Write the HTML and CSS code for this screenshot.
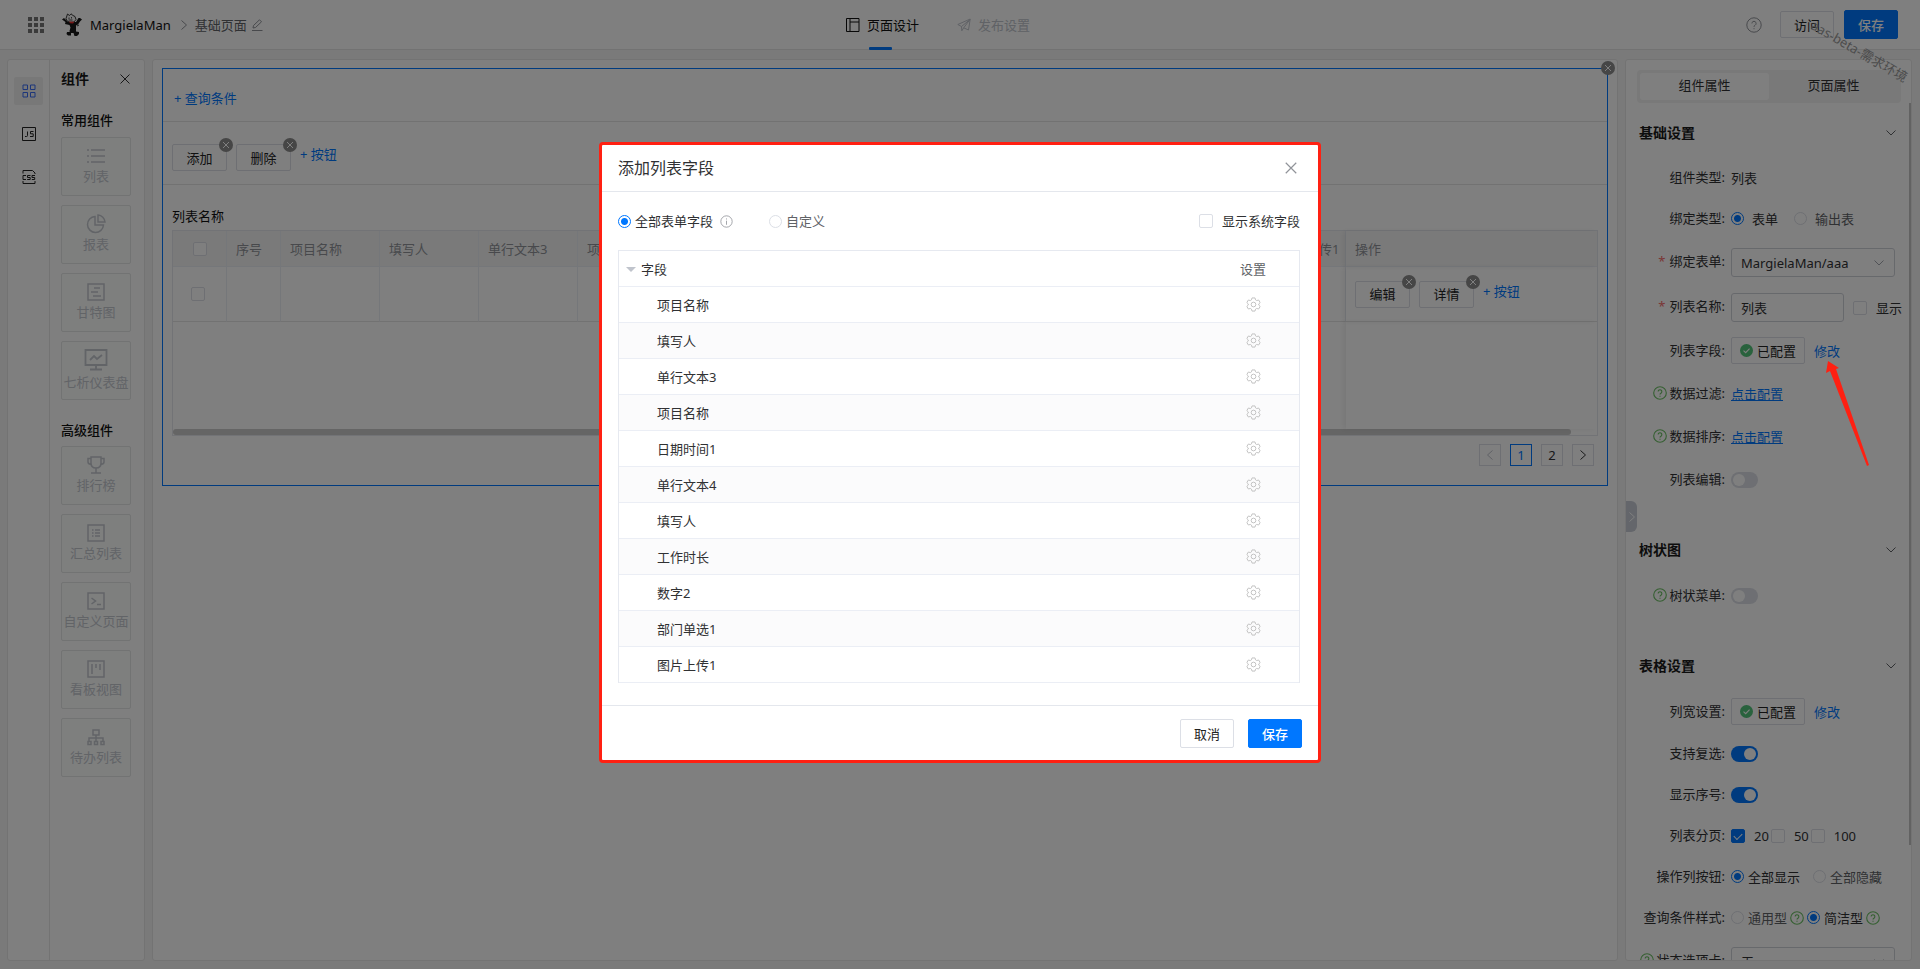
FILE: index.html
```html
<!DOCTYPE html>
<html lang="zh-CN">
<head>
<meta charset="utf-8">
<title>页面设计</title>
<link rel="stylesheet" href="styles.css">
</head>
<body>
<svg class="sprite" aria-hidden="true">
  <symbol id="x" viewBox="0 0 12 12"><path d="M1.500 1.500l9 9M10.500 1.500l-9 9"/></symbol>
  <symbol id="down" viewBox="0 0 12 12"><path d="M1.500 3.500L6 8l4.500-4.500"/></symbol>
  <symbol id="right" viewBox="0 0 12 12"><path d="M3.500 1.500L8.500 6l-5 4.500"/></symbol>
  <symbol id="left" viewBox="0 0 12 12"><path d="M8.500 1.500L3.500 6l5 4.500"/></symbol>
  <symbol id="help" viewBox="0 0 16 16"><circle cx="8" cy="8" r="7.200"/><path d="M5.900 6.400a2.100 2.100 0 1 1 3.200 1.800c-.8.500-1.100.8-1.100 1.600M8 11.200v1"/></symbol>
  <symbol id="info" viewBox="0 0 16 16"><circle cx="8" cy="8" r="7"/><path d="M8 7v5M8 4.200v1.300"/></symbol>
  <symbol id="check" viewBox="0 0 14 14"><circle cx="7" cy="7" r="7" fill="#52c47a" stroke="none"/><path d="M3.800 7.200l2.300 2.200 4.200-4.400" stroke="#fff" stroke-width="1.200"/></symbol>
  <symbol id="gear" viewBox="0 0 16 16"><path d="M6.400 1h3.200l.6 2.100 1.200.7 2.100-.6 1.600 2.800L13.600 7.400v1.200l1.500 1.400-1.600 2.800-2.100-.6-1.200.7-.6 2.100H6.400l-.6-2.100-1.200-.7-2.100.6L.9 10l1.500-1.400V7.400L.9 6l1.600-2.800 2.100.6 1.200-.7z"/><circle cx="8" cy="8" r="2.500"/></symbol>
</svg>

<div class="app">
  <header class="topbar">
    <div class="crumbs">
      <svg class="dots" viewBox="0 0 16 16"><path d="M0 0h4v4H0zM6 0h4v4H6zM12 0h4v4h-4zM0 6h4v4H0zM6 6h4v4H6zM12 6h4v4h-4zM0 12h4v4H0zM6 12h4v4H6zM12 12h4v4h-4z"/></svg>
      <svg class="avatar" viewBox="0 0 20 23"><path d="M0 6.500l2-1.500 4 4h8l2.500-4L18 5l2 1.500-2 2-2 3-2 1v6l3 .5v2l-2 2h-2.500l-1-3H8l-.5-2 1-3.500L7.500 12 3 11l.500-2z" fill="#181818"/><path d="M5.500 1l2 1.500L9 .800l2 1.700 2 1 1 3-2 2.500-4 .3L5 8 4 5.500z" fill="#f4f4f4" stroke="#222" stroke-width=".9"/><path d="M7 8.500l5.500.3-1.500 1.700-3-.2z" fill="#e33"/><path d="M5 19h4v3.500H6L4.500 21z" fill="#181818"/><path d="M7 4.500v1.500M9.500 4v1.500M6.500 7h4" stroke="#222" stroke-width=".8"/><path d="M15 13l2-1" stroke="#333"/></svg>
      <span class="app-name">MargielaMan</span>
      <svg class="ico i12 muted"><use href="#right"/></svg>
      <span class="page-name">基础页面</span>
      <svg class="ico i12 muted" viewBox="0 0 12 12"><path d="M1 11.500h10.500M2 9l.5-2.500L8.500.8l2 2L4.500 8.500z"/></svg>
    </div>
    <nav class="top-tabs">
      <a class="top-tab active" href="#design"><svg class="ico i14" viewBox="0 0 14 14"><path d="M.5.500h12.500v13H.500zM4 .5v13M4 4h9"/></svg>页面设计</a>
      <a class="top-tab" href="#publish"><svg class="ico i14" viewBox="0 0 14 14"><path d="M.8 6.500L13.200 1l-1.700 11-4.800-2.200-1.900 3-.3-4.300zM4.500 8.500L13 1.500 6.700 9.800"/></svg>发布设置</a>
    </nav>
    <div class="top-actions">
      <svg class="ico i16 muted"><use href="#help"/></svg>
      <button class="btn" type="button">访问</button>
      <button class="btn primary" type="button">保存</button>
    </div>
  </header>

  <main class="work">
    <aside class="left">
      <nav class="rail">
        <button class="rail-btn active" type="button" aria-label="组件"><svg class="ico i14" viewBox="0 0 14 14"><path d="M1 1h4.500v4.500H1zM8.500 1H13v4.500H8.500zM1 8.500h4.500V13H1zM8.500 8.500H13V13H8.500z"/></svg></button>
        <button class="rail-btn" type="button" aria-label="JS"><svg class="ico i14" viewBox="0 0 14 14"><path d="M.5.500h13v13H.500zM5.500 4.500v4q0 1-1 1H3M11.500 4.500h-3v2.300h2.700v2.700H8"/></svg></button>
        <button class="rail-btn" type="button" aria-label="CSS"><svg class="ico i14" viewBox="0 0 14 14"><path d="M1 3.500v-3h9.500L13 3v1M1 11v2.500h12V11M4 5.500H1v4h3M8.500 5.500h-3v2h2.700v2H5.200M13 5.500h-3v2h2.700v2H9.800"/></svg></button>
      </nav>
      <section class="palette">
        <div class="palette-head"><h2>组件</h2><svg class="ico i12"><use href="#x"/></svg></div>
        <h3>常用组件</h3>
        <div class="cards">
          <div class="card"><svg class="ico i20" viewBox="0 0 20 20"><path d="M5 4h14M5 10h14M5 16h14M1 4h2M1 10h2M1 16h2"/></svg>列表</div>
          <div class="card"><svg class="ico i20" viewBox="0 0 20 20"><path d="M9 2.500a8 8 0 1 0 8.500 8.500H9zM12 1v7h7a7.500 7.500 0 0 0-7-7z"/></svg>报表</div>
          <div class="card"><svg class="ico i20" viewBox="0 0 20 20"><path d="M2 2h16v16H2zM8 6h6M5 10h7M7 14h8"/></svg>甘特图</div>
          <div class="card"><svg class="ico i24" viewBox="0 0 24 24"><path d="M1.500 2h21v15h-21zM12 17v4M6 21.500h12M6 12l4-4 3 3 5-4"/></svg>七析仪表盘</div>
        </div>
        <h3 class="second">高级组件</h3>
        <div class="cards">
          <div class="card"><svg class="ico i20" viewBox="0 0 20 20"><path d="M5 2h10v6q0 5-5 5T5 8zM5 3.500H2V7q0 2 3 2.500M15 3.500h3V7q0 2-3 2.500M10 13v5M5 18h10"/></svg>排行榜</div>
          <div class="card"><svg class="ico i20" viewBox="0 0 20 20"><path d="M2 2h16v16H2zM6 7h1.500M9 7h5M6 10h1.500M9 10h5M6 13h1.500M9 13h5"/></svg>汇总列表</div>
          <div class="card"><svg class="ico i20" viewBox="0 0 20 20"><path d="M2 2h16v16H2zM5.500 7l4 3-4 3M11 13.500h4"/></svg>自定义页面</div>
          <div class="card"><svg class="ico i20" viewBox="0 0 20 20"><path d="M2 2h16v16H2zM6 5v10M10 5v4M14 5v6"/></svg>看板视图</div>
          <div class="card"><svg class="ico i20" viewBox="0 0 20 20"><path d="M7 3h6v5H7zM10 8v6M3 14v-3h14v3M2 14.500h3v3H2zM8.500 14.500h3v3h-3zM15 14.500h3v3h-3z"/></svg>待办列表</div>
        </div>
      </section>
    </aside>

    <section class="canvas">
      <div class="selected">
        <button class="remove corner" type="button" aria-label="移除"><svg class="ico"><use href="#x"/></svg></button>
        <div class="query"><a class="link" href="#query">+ 查询条件</a></div>
        <div class="toolbar">
          <span class="tool"><button class="btn" type="button">添加</button><button class="remove" type="button" aria-label="移除"><svg class="ico"><use href="#x"/></svg></button></span>
          <span class="tool"><button class="btn" type="button">删除</button><button class="remove" type="button" aria-label="移除"><svg class="ico"><use href="#x"/></svg></button></span>
          <a class="link" href="#add">+ 按钮</a>
        </div>
        <div class="list-title">列表名称</div>
        <div class="grid-box">
          <table class="data">
            <colgroup><col class="c-sm"><col class="c-sm"><col class="c-md"><col class="c-md"><col class="c-md"><col class="c-md"><col class="c-md"><col class="c-md"><col class="c-md"><col class="c-md"><col class="c-md"><col class="c-md"><col><col class="c-ops"></colgroup>
            <thead><tr><th class="mid"><input type="checkbox" aria-label="全选"></th><th>序号</th><th>项目名称</th><th>填写人</th><th>单行文本3</th><th>项目名称</th><th>日期时间1</th><th>单行文本4</th><th>填写人</th><th>工作时长</th><th>数字2</th><th>部门单选1</th><th>图片上传1</th><th class="ops">操作</th></tr></thead>
            <tbody><tr><td class="pick"><input type="checkbox" aria-label="选择"></td><td></td><td></td><td></td><td></td><td></td><td></td><td></td><td></td><td></td><td></td><td></td><td></td><td class="ops"><div class="row-tools">
              <span class="tool"><button class="btn" type="button">编辑</button><button class="remove" type="button" aria-label="移除"><svg class="ico"><use href="#x"/></svg></button></span>
              <span class="tool"><button class="btn" type="button">详情</button><button class="remove" type="button" aria-label="移除"><svg class="ico"><use href="#x"/></svg></button></span>
              <a class="link" href="#add">+ 按钮</a></div></td></tr></tbody>
          </table>
          <div class="blank"><div class="blank-main"></div><div class="blank-ops"></div></div>
          <div class="hbar"></div>
        </div>
        <div class="pager">
          <button type="button" class="off" aria-label="上一页"><svg class="ico i12"><use href="#left"/></svg></button>
          <button type="button" class="on">1</button>
          <button type="button">2</button>
          <button type="button" aria-label="下一页"><svg class="ico i12"><use href="#right"/></svg></button>
        </div>
      </div>
    </section>

    <aside class="props">
      <div class="seg"><button type="button" class="on">组件属性</button><button type="button">页面属性</button></div>
      <div class="vbar"></div>
      <button class="handle" type="button" aria-label="收起"><svg class="ico i12"><use href="#right"/></svg></button>

      <section class="group first">
        <h2>基础设置<svg class="ico i12"><use href="#down"/></svg></h2>
        <div class="row short"><span class="label">组件类型:</span><span class="val">列表</span></div>
        <div class="row short"><span class="label">绑定类型:</span><div class="val wide"><label><input type="radio" name="bind" checked>表单</label><label class="soft"><input type="radio" name="bind">输出表</label></div></div>
        <div class="row tall"><label class="label req" for="form">绑定表单:</label><div class="val"><div class="select"><select id="form"><option>MargielaMan/aaa</option></select><svg class="ico i12"><use href="#down"/></svg></div></div></div>
        <div class="row tall"><label class="label req" for="name">列表名称:</label><div class="val"><input class="text" id="name" type="text" value="列表"><label class="box"><input type="checkbox">显示</label></div></div>
        <div class="row"><span class="label">列表字段:</span><div class="val"><button class="btn done" type="button"><svg class="ico i13"><use href="#check"/></svg>已配置</button><a class="link" href="#edit">修改</a></div></div>
        <div class="row"><span class="label"><svg class="ico i14 tip"><use href="#help"/></svg>数据过滤:</span><div class="val"><a class="link under" href="#filter">点击配置</a></div></div>
        <div class="row"><span class="label"><svg class="ico i14 tip"><use href="#help"/></svg>数据排序:</span><div class="val"><a class="link under" href="#sort">点击配置</a></div></div>
        <div class="row"><label class="label" for="sw1">列表编辑:</label><div class="val"><input class="switch" id="sw1" type="checkbox"></div></div>
      </section>
      <section class="group">
        <h2>树状图<svg class="ico i12"><use href="#down"/></svg></h2>
        <div class="row"><label class="label" for="sw2"><svg class="ico i14 tip"><use href="#help"/></svg>树状菜单:</label><div class="val"><input class="switch" id="sw2" type="checkbox"></div></div>
      </section>
      <section class="group">
        <h2>表格设置<svg class="ico i12"><use href="#down"/></svg></h2>
        <div class="row"><span class="label">列宽设置:</span><div class="val"><button class="btn done" type="button"><svg class="ico i13"><use href="#check"/></svg>已配置</button><a class="link" href="#width">修改</a></div></div>
        <div class="row short"><label class="label" for="sw3">支持复选:</label><div class="val"><input class="switch" id="sw3" type="checkbox" checked></div></div>
        <div class="row short"><label class="label" for="sw4">显示序号:</label><div class="val"><input class="switch" id="sw4" type="checkbox" checked></div></div>
        <div class="row short"><span class="label">列表分页:</span><div class="val tight"><label class="box"><input type="checkbox" checked>20</label><label class="box"><input type="checkbox">50</label><label class="box"><input type="checkbox">100</label></div></div>
        <div class="row short"><span class="label">操作列按钮:</span><div class="val mid-gap"><label><input type="radio" name="ops" checked>全部显示</label><label class="soft"><input type="radio" name="ops">全部隐藏</label></div></div>
        <div class="row short"><span class="label">查询条件样式:</span><div class="val tips"><label class="soft"><input type="radio" name="style">通用型</label><svg class="ico i14 tip"><use href="#help"/></svg><label><input type="radio" name="style" checked>简洁型</label><svg class="ico i14 tip"><use href="#help"/></svg></div></div>
        <div class="row tall"><label class="label" for="tabs"><svg class="ico i14 tip"><use href="#help"/></svg>状态选项卡:</label><div class="val"><div class="select"><select id="tabs"><option>无</option></select><svg class="ico i12"><use href="#down"/></svg></div></div></div>
      </section>
    </aside>
  </main>
  <div class="watermark">aas-beta-需求环境</div>
</div>

<div class="overlay">
  <div class="modal" role="dialog" aria-labelledby="dlg">
    <div class="modal-head"><h1 id="dlg">添加列表字段</h1><button class="close" type="button" aria-label="关闭"><svg class="ico i14"><use href="#x"/></svg></button></div>
    <div class="modal-body">
      <div class="modes">
        <label><input type="radio" name="mode" checked>全部表单字段</label><svg class="ico i13 muted"><use href="#info"/></svg>
        <label class="soft custom"><input type="radio" name="mode">自定义</label>
        <label class="box sys"><input type="checkbox">显示系统字段</label>
      </div>
      <table class="fields">
        <thead><tr><th><span class="caret"></span>字段</th><th class="set">设置</th></tr></thead>
        <tbody>
          <tr><td>项目名称</td><td class="set"><svg class="ico i15"><use href="#gear"/></svg></td></tr>
          <tr><td>填写人</td><td class="set"><svg class="ico i15"><use href="#gear"/></svg></td></tr>
          <tr><td>单行文本3</td><td class="set"><svg class="ico i15"><use href="#gear"/></svg></td></tr>
          <tr><td>项目名称</td><td class="set"><svg class="ico i15"><use href="#gear"/></svg></td></tr>
          <tr><td>日期时间1</td><td class="set"><svg class="ico i15"><use href="#gear"/></svg></td></tr>
          <tr><td>单行文本4</td><td class="set"><svg class="ico i15"><use href="#gear"/></svg></td></tr>
          <tr><td>填写人</td><td class="set"><svg class="ico i15"><use href="#gear"/></svg></td></tr>
          <tr><td>工作时长</td><td class="set"><svg class="ico i15"><use href="#gear"/></svg></td></tr>
          <tr><td>数字2</td><td class="set"><svg class="ico i15"><use href="#gear"/></svg></td></tr>
          <tr><td>部门单选1</td><td class="set"><svg class="ico i15"><use href="#gear"/></svg></td></tr>
          <tr><td>图片上传1</td><td class="set"><svg class="ico i15"><use href="#gear"/></svg></td></tr>
        </tbody>
      </table>
    </div>
    <div class="modal-foot"><button class="btn" type="button">取消</button><button class="btn primary" type="button">保存</button></div>
  </div>
  <svg class="arrow" viewBox="0 0 44 106"><path d="M3 1l11 7-3 1 33 96-2 1L5 11l-4 2z" fill="#ff2012"/></svg>
</div>
</body>
</html>
```
FILE: styles.css
```css
* { box-sizing: border-box; }
body, h1, h2, h3 { margin: 0; }
body, button, input, select {
  font-family: "Noto Sans", "Noto Sans CJK SC", sans-serif;
  font-size: 13px;
  line-height: 20px;
}
body { color: #303133; overflow: hidden; }
a { color: inherit; text-decoration: none; }
button { padding: 0; background: none; border: 0; color: inherit; }
h2 { font-size: 14px; font-weight: 700; color: #1a1a1a; }
h3 { font-size: 13px; font-weight: 500; color: #111; }
.sprite { display: none; }

.ico { fill: none; stroke: currentColor; stroke-width: 1; flex: none; display: block; }
.i12 { width: 12px; height: 12px; }
.i13 { width: 13px; height: 13px; }
.i14 { width: 14px; height: 14px; }
.i15 { width: 15px; height: 15px; }
.i16 { width: 16px; height: 16px; }
.i20 { width: 20px; height: 20px; stroke-width: 1.5; }
.i24 { width: 24px; height: 24px; stroke-width: 1.8; }
.muted { color: #909399; }
.tip { color: #6cc065; stroke-width: 1.3; }

.btn {
  height: 27px;
  min-width: 54px;
  padding: 0 12px;
  background: #fff;
  border: 1px solid #dcdfe6;
  border-radius: 2px;
  color: #222;
}
.btn.primary { height: 29px; background: #0077ff; border-color: #0077ff; color: #fff; font-weight: 500; }
.link { color: #0077ff; }
.link.under { text-decoration: underline; }
.soft { color: #606266; }

input[type="checkbox"], input[type="radio"] {
  appearance: none;
  width: 14px;
  height: 14px;
  margin: 0;
  flex: none;
  background: #fff;
  border: 1px solid #dcdfe6;
  border-radius: 2px;
}
input[type="radio"] { width: 13px; height: 13px; border-radius: 50%; }
input[type="radio"]:checked { border-color: #0077ff; background: radial-gradient(circle, #0077ff 3px, #fff 4px); }
.box input:checked { border-color: #0077ff; background: #0077ff; display: grid; place-items: center; }
.box input:checked::after { content: ""; width: 7px; height: 4px; border: solid #fff; border-width: 0 0 1px 1px; transform: rotate(-45deg); }
input.switch { width: 27px; height: 16px; border: 0; border-radius: 8px; background: #dcdfe6; padding: 2px; display: flex; }
input.switch::after { content: ""; width: 12px; height: 12px; border-radius: 50%; background: #fff; }
input.switch:checked { background: #0077ff; justify-content: flex-end; }

.app { height: 100vh; display: flex; flex-direction: column; background: #f5f5f5; position: relative; overflow: hidden; }
.topbar {
  height: 50px;
  flex: none;
  display: grid;
  grid-template-columns: 1fr auto 1fr;
  background: #fff;
  border-bottom: 1px solid #e4e4e4;
}
.crumbs { display: flex; align-items: center; padding-left: 28px; }
.dots { width: 16px; height: 16px; fill: #777; margin-right: 18px; }
.avatar { width: 20px; height: 23px; margin-right: 8px; }
.app-name { color: #111; margin-right: 7px; }
.page-name { color: #606266; margin: 0 4px 0 5px; }
.top-tabs { display: flex; gap: 38px; margin-right: 44px; }
.top-tab { display: flex; align-items: center; gap: 7px; color: #c0c4cc; position: relative; }
.top-tab.active { color: #111; }
.top-tab.active::after { content: ""; position: absolute; left: 23px; bottom: -1px; width: 23px; height: 3px; border-radius: 1px; background: #0077ff; }
.top-actions { display: flex; align-items: center; justify-content: flex-end; gap: 10px; padding-right: 22px; }
.top-actions .muted { margin-right: 8px; }

.work { flex: 1; min-height: 0; display: flex; gap: 7px; padding: 9px 8px 8px 7px; }
.left, .canvas, .props { background: #fff; border: 1px solid #e6e6e6; border-radius: 3px; }
.left { display: flex; width: 138px; flex: none; }
.rail { width: 42px; border-right: 1px solid #e6e6e6; display: flex; flex-direction: column; align-items: center; gap: 15px; padding-top: 17px; }
.rail-btn { width: 29px; height: 28px; display: grid; place-items: center; color: #222; border-radius: 2px; }
.rail-btn.active { background: #f0f0f0; color: #3a6cf5; }
.palette { flex: 1; padding: 8px 13px 0 11px; }
.palette-head { display: flex; align-items: center; justify-content: space-between; height: 22px; margin-bottom: 20px; }
.palette h3 { margin-bottom: 7px; }
.palette h3.second { margin: 20px 0 6px; }
.cards { display: grid; gap: 9px; }
.card {
  height: 59px;
  padding-bottom: 2px;
  display: flex;
  flex-direction: column;
  align-items: center;
  justify-content: center;
  white-space: nowrap;
  color: #c4c8cf;
  background: #fcfefd;
  border: 1px solid #e4e6e6;
  border-radius: 2px;
}

.canvas { flex: 1; min-width: 0; padding: 8px 9px; }
.selected { border: 1px solid #0077ff; position: relative; padding-bottom: 19px; }
.remove { width: 14px; height: 14px; border-radius: 50%; background: #8c8c8c; color: #fff; display: grid; place-items: center; position: absolute; right: -6px; top: -6px; }
.remove .ico { width: 8px; height: 8px; stroke-width: 1.5; }
.remove.corner { right: -8px; top: -8px; }
.query { padding: 19px 11px 13px; border-bottom: 1px solid #e4e4e4; }
.toolbar { display: flex; gap: 9px; padding: 22px 9px 13px; border-bottom: 1px solid #e4e4e4; }
.tool { position: relative; display: flex; }
.tool .btn { min-width: 55px; }
.list-title { padding: 21px 9px 4px; color: #111; }
.grid-box { margin: 0 9px; border: 1px solid #e4e7ed; position: relative; }
.data { width: 100%; table-layout: fixed; border-collapse: separate; border-spacing: 0; }
.c-sm { width: 54px; }
.c-md { width: 99px; }
.c-ops { width: 251px; }
.data th { height: 36px; padding: 0 9px; text-align: left; font-weight: 400; color: #909399; background: #f5f5f5; border-right: 1px solid #ebeef5; border-bottom: 1px solid #ebeef5; white-space: nowrap; }
.data td { height: 55px; padding: 0 9px; border-right: 1px solid #ebeef5; border-bottom: 1px solid #e4e4e4; }
.data th:last-child, .data td:last-child { border-right: 0; }
.data th input, .data td input { display: block; }
.data .mid { padding-left: 20px; }
.data .pick { padding-left: 18px; }
.data .ops { box-shadow: -3px 0 5px rgba(0, 0, 0, .06); }
.row-tools { display: flex; gap: 9px; }
.blank { display: flex; height: 107px; }
.blank-main { flex: 1; }
.blank-ops { width: 251px; box-shadow: -3px 0 5px rgba(0, 0, 0, .06); }
.hbar { height: 6px; margin-right: 26px; background: #cacaca; border-radius: 3px; }
.pager { display: flex; justify-content: flex-end; gap: 9px; padding: 8px 13px 0; }
.pager button { width: 22px; height: 22px; border: 1px solid #dcdfe6; display: grid; place-items: center; }
.pager .on { border-color: #0077ff; color: #0077ff; }
.pager .off { color: #c0c4cc; }

.props { width: 287px; flex: none; position: relative; overflow: hidden; padding-top: 10px; }
.seg { display: grid; grid-template-columns: 1fr 1fr; margin: 0 10px 0 11px; padding: 3px; height: 33px; background: #f2f2f2; border-radius: 4px; }
.seg button { border-radius: 3px; padding-bottom: 4px; }
.seg .on { background: #fff; }
.vbar { position: absolute; right: 0; top: 43px; width: 2px; height: 742px; background: #c4c4c4; }
.handle { position: absolute; left: 0; top: 441px; width: 11px; height: 31px; border-radius: 0 6px 6px 0; background: #c8ccd6; color: #fff; display: grid; place-items: center; }
.group { margin-top: 23px; }
.group.first { margin-top: 5px; }
.group h2 { height: 50px; display: flex; align-items: center; justify-content: space-between; padding: 0 14px 0 13px; }
.group h2 .ico { color: #606266; }
.row { height: 43px; display: flex; align-items: center; gap: 6px; white-space: nowrap; }
.row.short { height: 41px; }
.row.tall { height: 45px; }
.label { width: 99px; flex: none; display: flex; justify-content: flex-end; align-items: center; gap: 3px; padding-bottom: 4px; }
.req::before { content: "*"; color: #f56c6c; margin-right: 1px; }
.val { flex: 1; display: flex; align-items: center; gap: 9px; padding-bottom: 2px; }
.tall .val { padding-bottom: 0; }
.val label { display: flex; align-items: center; gap: 4px; }
.val .box { gap: 9px; }
.val.wide { gap: 16px; }
.val.wide label { gap: 8px; }
.val.mid-gap { gap: 13px; }
.val.tight { gap: 2px; }
.val.tips { gap: 3px; }
.select { position: relative; width: 164px; }
.select select, .text { height: 29px; border: 1px solid #cfd2d9; border-radius: 3px; background: #fff; color: #303133; padding: 0 9px; }
.select select { appearance: none; width: 100%; display: block; }
.select .ico { position: absolute; right: 10px; top: 9px; color: #a0a4ac; pointer-events: none; }
.text { width: 113px; }
.done { display: flex; align-items: center; gap: 4px; padding: 0 8px; }

.watermark { position: absolute; right: 3px; top: 42px; width: 112px; color: #999; font-size: 13px; white-space: nowrap; transform: rotate(30deg); pointer-events: none; }

.overlay { position: fixed; inset: 0; background: rgba(0, 0, 0, .5); display: flex; justify-content: center; align-items: flex-start; padding-top: 142px; }
.modal { width: 722px; background: #fff; border: 3px solid #ff2012; border-radius: 4px; }
.modal-head { height: 47px; display: flex; align-items: center; justify-content: space-between; padding: 0 20px 0 16px; border-bottom: 1px solid #e4e7ed; }
.modal-head h1 { font-size: 16px; font-weight: 400; line-height: 24px; }
.close { color: #909399; }
.modal-body { padding: 19px 18px 22px 16px; }
.modes { display: flex; align-items: center; height: 20px; margin-bottom: 19px; }
.modes label { display: flex; align-items: center; gap: 4px; }
.modes .muted { margin-left: 7px; }
.modes .custom { margin-left: 36px; }
.modes .sys { margin-left: auto; gap: 9px; }
.fields { width: 100%; border-spacing: 0; border: 1px solid #e6e9f0; border-bottom: 0; }
.fields th, .fields td { height: 36px; padding: 0 0 0 38px; text-align: left; font-weight: 400; border-bottom: 1px solid #ebeef5; }
.fields th { padding-left: 7px; }
.fields .set { width: 92px; padding: 0; text-align: center; color: #606266; white-space: nowrap; }
.fields td.set { color: #c0c0c0; }
.fields .set .ico { margin: 0 auto; }
.fields tbody tr:nth-child(even) { background: #fbfbfc; }
.caret { display: inline-block; border: solid transparent; border-width: 5px 5px 0; border-top-color: #c0c4cc; margin-right: 5px; vertical-align: 2px; }
.modal-foot { display: flex; justify-content: flex-end; gap: 14px; padding: 13px 16px 12px; border-top: 1px solid #e4e7ed; }
.modal-foot .btn { height: 29px; }
.arrow { position: absolute; top: 360px; right: 51px; width: 44px; height: 106px; }
```
